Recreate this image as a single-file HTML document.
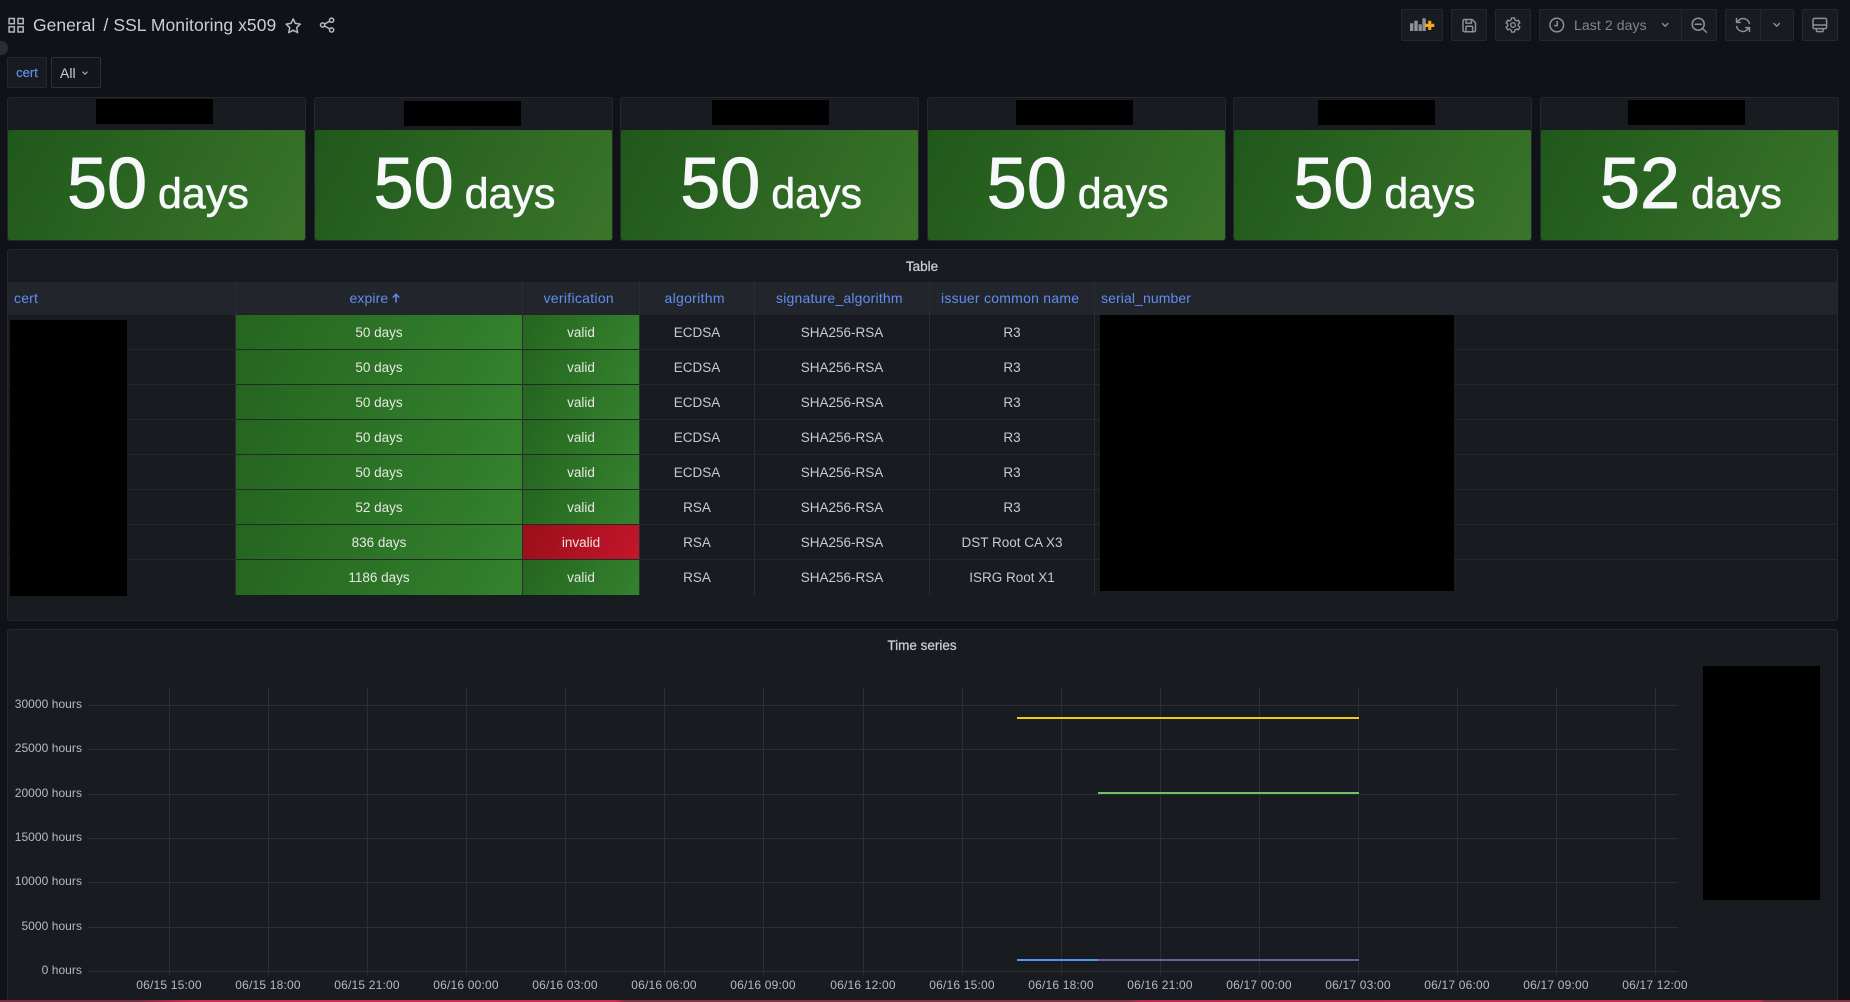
<!DOCTYPE html>
<html>
<head>
<meta charset="utf-8">
<title>SSL Monitoring x509</title>
<style>
html,body{margin:0;padding:0;width:1850px;height:1002px;overflow:hidden;background:#111217;font-family:"Liberation Sans",sans-serif;color:#ccccdc}
div,span{box-sizing:border-box}
.a{position:absolute;white-space:nowrap}
.btn{position:absolute;top:9px;height:32px;background:#181b1f;border:1px solid #25282d;border-radius:2px}
.panel{position:absolute;background:#181b1f;border:1px solid #25282d;border-radius:3px}
.stat{position:absolute;top:97px;height:144px;width:299px;background:#181b1f;border:1px solid #25282d;border-radius:3px;overflow:hidden}
.stat .g{position:absolute;left:0;right:0;top:32px;bottom:0;background:linear-gradient(120deg,#1f581b,#3a752a);border-radius:2px}
.stat .n{position:absolute;left:59px;top:50px;font-size:72px;line-height:72px;color:#f7f8fa;-webkit-text-stroke:.9px #f7f8fa}
.stat .u{position:absolute;left:150px;top:74.5px;font-size:43px;line-height:43px;color:#f7f8fa;-webkit-text-stroke:.6px #f7f8fa}
.k{position:absolute;background:#000}
.hc{position:absolute;top:282px;height:33px;line-height:33px;font-size:14px;letter-spacing:.2px;color:#5f8fee;white-space:nowrap}
.row{position:absolute;left:8px;width:1829px;height:35px;border-bottom:1px solid #24272c;font-size:13.5px;color:#c8c9d2}
.row div{position:absolute;top:0;height:34px;line-height:35px;text-align:center;white-space:nowrap}
.e{left:228px;width:286px;background:linear-gradient(120deg,#25651f,#34822e);color:#e6e8e4}
.v{left:515px;width:116px;background:linear-gradient(120deg,#25651f,#34822e);color:#e6e8e4}
.v.bad{background:linear-gradient(120deg,#990f1a,#c4162a);color:#f2e2e4}
.al{left:632px;width:114px}
.si{left:747px;width:174px}
.is{left:922px;width:164px}
.yl{position:absolute;right:1768px;font-size:12px;line-height:14px;letter-spacing:.05px;color:#b9bac2;white-space:nowrap}
.xl{position:absolute;top:978px;width:80px;text-align:center;font-size:12px;line-height:14px;letter-spacing:.2px;color:#b9bac2;white-space:nowrap}
</style>
</head>
<body>

<!-- side toggle -->
<div class="a" style="left:-6px;top:41px;width:14px;height:14px;border-radius:50%;background:#2a2c33"></div>

<!-- title -->
<div class="a" style="left:33px;top:14px;line-height:22px;font-size:17.5px;color:#ccccdc">General</div>
<div class="a" style="left:103.5px;top:14px;line-height:22px;font-size:17.5px;letter-spacing:.06px;color:#ccccdc">/ SSL Monitoring x509</div>

<!-- toolbar -->
<div class="btn" style="left:1401px;width:42px"></div>
<div class="btn" style="left:1451px;width:36px"></div>
<div class="btn" style="left:1495px;width:36px"></div>
<div class="btn" style="left:1539px;width:178px"></div>
<div class="a" style="left:1681px;top:9px;width:1px;height:32px;background:#25282d"></div>
<div class="btn" style="left:1725px;width:69px"></div>
<div class="a" style="left:1760px;top:9px;width:1px;height:32px;background:#25282d"></div>
<div class="btn" style="left:1802px;width:36px"></div>
<div class="a" style="left:1574px;top:14px;line-height:22px;font-size:14px;letter-spacing:.1px;color:#80859a">Last 2 days</div>

<!-- variable -->
<div class="a" style="left:7px;top:57px;width:40px;height:31px;background:#181b1f;border:1px solid #25282d;border-radius:2px;text-align:center;line-height:30px;font-size:13px;color:#5f8fee;-webkit-text-stroke:.2px #5f8fee">cert</div>
<div class="a" style="left:51px;top:57px;width:50px;height:31px;background:#14161b;border:1px solid #2c3038;border-radius:2px"></div>
<div class="a" style="left:60px;top:62px;line-height:22px;font-size:14px;color:#ccccdc">All</div>

<!-- stat panels -->
<div class="stat" style="left:7px"><div class="g"></div><div class="n">50</div><div class="u">days</div></div>
<div class="stat" style="left:313.6px"><div class="g"></div><div class="n">50</div><div class="u">days</div></div>
<div class="stat" style="left:620.2px"><div class="g"></div><div class="n">50</div><div class="u">days</div></div>
<div class="stat" style="left:926.8px"><div class="g"></div><div class="n">50</div><div class="u">days</div></div>
<div class="stat" style="left:1233.4px"><div class="g"></div><div class="n">50</div><div class="u">days</div></div>
<div class="stat" style="left:1540px"><div class="g"></div><div class="n">52</div><div class="u">days</div></div>
<div class="k" style="left:96px;top:99px;width:117px;height:25px"></div>
<div class="k" style="left:404px;top:101px;width:117px;height:25px"></div>
<div class="k" style="left:712px;top:100px;width:117px;height:25px"></div>
<div class="k" style="left:1016px;top:100px;width:117px;height:25px"></div>
<div class="k" style="left:1318px;top:100px;width:117px;height:25px"></div>
<div class="k" style="left:1628px;top:100px;width:117px;height:25px"></div>

<!-- table panel -->
<div class="panel" style="left:7px;top:249px;width:1831px;height:372px"></div>
<div class="a" style="left:822px;width:200px;top:256.5px;text-align:center;line-height:20px;font-size:13.5px;color:#ccccdc;-webkit-text-stroke:.25px #ccccdc">Table</div>
<div class="a" style="left:8px;top:282px;width:1829px;height:33px;background:#22252b"></div>

<div class="hc" style="left:14px">cert</div>
<div class="hc" style="left:349.5px;letter-spacing:.1px">expire</div>
<div class="hc" style="left:543.5px;letter-spacing:.3px">verification</div>
<div class="hc" style="left:664.5px;letter-spacing:.3px">algorithm</div>
<div class="hc" style="left:776px">signature_algorithm</div>
<div class="hc" style="left:941px;letter-spacing:.25px">issuer common name</div>
<div class="hc" style="left:1101px;letter-spacing:.1px">serial_number</div>

<div class="row" style="top:315px"><div class="e">50 days</div><div class="v">valid</div><div class="al">ECDSA</div><div class="si">SHA256-RSA</div><div class="is">R3</div></div>
<div class="row" style="top:350px"><div class="e">50 days</div><div class="v">valid</div><div class="al">ECDSA</div><div class="si">SHA256-RSA</div><div class="is">R3</div></div>
<div class="row" style="top:385px"><div class="e">50 days</div><div class="v">valid</div><div class="al">ECDSA</div><div class="si">SHA256-RSA</div><div class="is">R3</div></div>
<div class="row" style="top:420px"><div class="e">50 days</div><div class="v">valid</div><div class="al">ECDSA</div><div class="si">SHA256-RSA</div><div class="is">R3</div></div>
<div class="row" style="top:455px"><div class="e">50 days</div><div class="v">valid</div><div class="al">ECDSA</div><div class="si">SHA256-RSA</div><div class="is">R3</div></div>
<div class="row" style="top:490px"><div class="e">52 days</div><div class="v">valid</div><div class="al">RSA</div><div class="si">SHA256-RSA</div><div class="is">R3</div></div>
<div class="row" style="top:525px"><div class="e">836 days</div><div class="v bad">invalid</div><div class="al">RSA</div><div class="si">SHA256-RSA</div><div class="is">DST Root CA X3</div></div>
<div class="row" style="top:560px;border-bottom:0"><div class="e" style="height:35px">1186 days</div><div class="v" style="height:35px">valid</div><div class="al">RSA</div><div class="si">SHA256-RSA</div><div class="is">ISRG Root X1</div></div>

<!-- column separators -->
<div class="a" style="left:235px;top:282px;width:1px;height:313px;background:#2a2d33"></div>
<div class="a" style="left:522px;top:282px;width:1px;height:313px;background:#2a2d33"></div>
<div class="a" style="left:639px;top:282px;width:1px;height:313px;background:#2a2d33"></div>
<div class="a" style="left:754px;top:282px;width:1px;height:313px;background:#2a2d33"></div>
<div class="a" style="left:929px;top:282px;width:1px;height:313px;background:#2a2d33"></div>
<div class="a" style="left:1094px;top:282px;width:1px;height:313px;background:#2a2d33"></div>

<div class="k" style="left:10px;top:320px;width:117px;height:276px"></div>
<div class="k" style="left:1100px;top:315px;width:354px;height:276px"></div>

<!-- time series panel -->
<div class="panel" style="left:7px;top:629px;width:1831px;height:373px"></div>
<div class="a" style="left:822px;width:200px;top:636px;text-align:center;line-height:20px;font-size:13.5px;color:#ccccdc;-webkit-text-stroke:.25px #ccccdc">Time series</div>

<div class="yl" style="top:697px">30000 hours</div>
<div class="yl" style="top:741px">25000 hours</div>
<div class="yl" style="top:786px">20000 hours</div>
<div class="yl" style="top:830px">15000 hours</div>
<div class="yl" style="top:874px">10000 hours</div>
<div class="yl" style="top:919px">5000 hours</div>
<div class="yl" style="top:963px">0 hours</div>

<div class="xl" style="left:129px">06/15 15:00</div>
<div class="xl" style="left:228px">06/15 18:00</div>
<div class="xl" style="left:327px">06/15 21:00</div>
<div class="xl" style="left:426px">06/16 00:00</div>
<div class="xl" style="left:525px">06/16 03:00</div>
<div class="xl" style="left:624px">06/16 06:00</div>
<div class="xl" style="left:723px">06/16 09:00</div>
<div class="xl" style="left:823px">06/16 12:00</div>
<div class="xl" style="left:922px">06/16 15:00</div>
<div class="xl" style="left:1021px">06/16 18:00</div>
<div class="xl" style="left:1120px">06/16 21:00</div>
<div class="xl" style="left:1219px">06/17 00:00</div>
<div class="xl" style="left:1318px">06/17 03:00</div>
<div class="xl" style="left:1417px">06/17 06:00</div>
<div class="xl" style="left:1516px">06/17 09:00</div>
<div class="xl" style="left:1615px">06/17 12:00</div>

<div class="k" style="left:1703px;top:666px;width:117px;height:234px"></div>

<!-- bottom strip -->
<div class="a" style="left:0;top:1000px;width:1850px;height:2px;background:linear-gradient(90deg,#7c2a3d 0,#7c2a3d 135px,#c62f4e 190px,#c62f4e 615px,#8c3045 625px,#8c3045 1130px,#b52c4a 1140px,#c22e4d 1390px,#c22e4d 1760px,#84303f 1765px,#84303f 1850px)"></div>

<!-- vector layer: icons and chart -->
<svg class="a" style="left:0;top:0;pointer-events:none" width="1850" height="1002" viewBox="0 0 1850 1002" fill="none">
  <!-- grid icon -->
  <g stroke="#b6b8c2" stroke-width="1.5">
    <rect x="9.1" y="18.5" width="5.2" height="5.2"/>
    <rect x="18" y="18.5" width="5.2" height="5.2"/>
    <rect x="9.1" y="26.8" width="5.2" height="5.2"/>
    <rect x="18" y="26.8" width="5.2" height="5.2"/>
  </g>
  <!-- star -->
  <path d="M293.2 18.9l2.2 4.5 4.9.7-3.6 3.5.9 5-4.4-2.4-4.4 2.4.9-5-3.6-3.5 4.9-.7z" stroke="#b6b8c2" stroke-width="1.5" stroke-linejoin="round"/>
  <!-- share -->
  <g stroke="#b6b8c2" stroke-width="1.5">
    <circle cx="322.6" cy="25" r="2.1"/><circle cx="331.6" cy="20.2" r="2.1"/><circle cx="331.6" cy="30" r="2.1"/>
    <path d="M324.6 24l5.1-2.8M324.6 26l5.1 2.9"/>
  </g>
  <!-- add panel -->
  <g fill="#8f919c">
    <rect x="1410" y="23.3" width="3.4" height="7.7"/>
    <rect x="1414.3" y="20.7" width="3.4" height="10.3"/>
    <rect x="1418.6" y="24.3" width="3.2" height="6.7"/>
    <rect x="1422.4" y="18.3" width="3.4" height="12.7"/>
  </g>
  <path d="M1425 23.7h3.2v-3h3.1v3h3v3.3h-3v3h-3.1v-3H1425z" fill="#f5a623"/>
  <!-- save -->
  <g stroke="#8e9099" stroke-width="1.5" stroke-linejoin="round">
    <path d="M1463 21a1.5 1.5 0 0 1 1.5-1.5h7.6l3.4 3.4v7.3a1.5 1.5 0 0 1-1.5 1.5h-9.5a1.5 1.5 0 0 1-1.5-1.5z"/>
    <path d="M1466 19.7v3.4h5.4v-3M1466 31.5v-4.6a.6.6 0 0 1 .6-.6h5.4a.6.6 0 0 1 .6.6v4.6"/>
  </g>
  <!-- gear -->
  <g transform="translate(1513 25)" stroke="#8e9099" stroke-width="1.4" stroke-linejoin="round">
    <path d="M-1.85-5.07L-1.5-7.04H1.5L1.85-5.07L3.47-4.14L5.35-4.82L6.85-2.22L5.32-.94V.94L6.85 2.22L5.35 4.82L3.47 4.14L1.85 5.07L1.5 7.04H-1.5L-1.85 5.07L-3.47 4.14L-5.35 4.82L-6.85 2.22L-5.32 .94V-.94L-6.85-2.22L-5.35-4.82L-3.47-4.14z"/>
    <circle r="2.3"/>
  </g>
  <!-- clock -->
  <g stroke="#8e9099" stroke-width="1.5">
    <circle cx="1556.8" cy="25" r="6.8"/>
    <path d="M1557.2 21v4.6h-3"/>
  </g>
  <!-- chevrons -->
  <g stroke="#8e9099" stroke-width="1.4" stroke-linecap="round" stroke-linejoin="round">
    <path d="M1662.5 23.5l2.7 2.7 2.7-2.7"/>
    <path d="M1774 23.5l2.7 2.7 2.7-2.7"/>
  </g>
  <path d="M82.8 72l2.2 2.2 2.2-2.2" stroke="#a8aab4" stroke-width="1.2" stroke-linecap="round" stroke-linejoin="round"/>
  <!-- zoom out -->
  <g stroke="#8e9099" stroke-width="1.5" stroke-linecap="round">
    <circle cx="1698.2" cy="24.2" r="6"/>
    <path d="M1695.2 24.2h6M1702.6 28.6l3.8 3.6"/>
  </g>
  <!-- refresh -->
  <g stroke="#8e9099" stroke-width="1.5" stroke-linecap="round" stroke-linejoin="round">
    <path d="M1749.4 23.5A6.5 6.5 0 0 0 1738.4 20.6L1736.5 22.4M1736.5 18.5v3.9h3.9"/>
    <path d="M1736.6 26.5A6.5 6.5 0 0 0 1747.6 29.4L1749.5 27.6M1749.5 31.5v-3.9h-3.9"/>
  </g>
  <!-- tv -->
  <g stroke="#8e9099" stroke-width="1.5" stroke-linejoin="round">
    <rect x="1813" y="18.4" width="13.6" height="10.2" rx="1.5"/>
    <path d="M1813 25h13.6M1816.5 28.6v2.2a.8.8 0 0 0 .8.8h5a.8.8 0 0 0 .8-.8v-2.2"/>
  </g>
  <!-- sort arrow -->
  <path d="M396 302.5v-8M392.8 297.5l3.2-3.2 3.2 3.2" stroke="#5f8fee" stroke-width="1.5"/>

  <!-- chart grid -->
  <g stroke="#2b2e33" stroke-width="1">
    <path d="M88 705.5H1678M88 749.5H1678M88 794.5H1678M88 838.5H1678M88 882.5H1678M88 927.5H1678M88 971.5H1678"/>
    <path d="M169.5 687V975M268.5 687V975M367.5 687V975M466.5 687V975M565.5 687V975M664.5 687V975M763.5 687V975M863.5 687V975M962.5 687V975M1061.5 687V975M1160.5 687V975M1259.5 687V975M1358.5 687V975M1457.5 687V975M1556.5 687V975M1655.5 687V975"/>
  </g>
  <!-- series -->
  <rect x="1017" y="717" width="342" height="2" fill="#f2cc0c"/>
  <rect x="1098" y="792" width="261" height="2" fill="#73bf69"/>
  <rect x="1017" y="959" width="81" height="2" fill="#5794f2"/>
  <rect x="1098" y="959" width="261" height="2" fill="#6f5ea3"/>
</svg>

</body>
</html>
